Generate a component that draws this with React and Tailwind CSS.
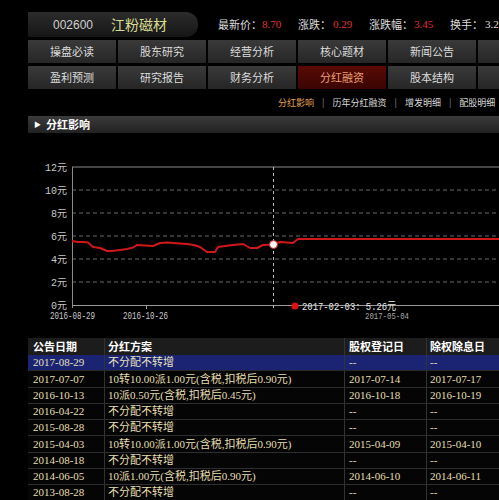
import React from 'react';

const cjk = { fontFamily: '"Noto Sans CJK SC", "Liberation Sans", sans-serif' };
const serif = { fontFamily: '"Liberation Serif", "Noto Sans CJK SC", serif' };

// last column is off screen, only its left edge shows
const navRows = [
  ['操盘必读', '股东研究', '经营分析', '核心题材', '新闻公告', ''],
  ['盈利预测', '研究报告', '财务分析', '分红融资', '股本结构', ''],
];

const rows = [
  ['2017-08-29', '不分配不转增', '--', '--'],
  ['2017-07-07', '10转10.00派1.00元(含税,扣税后0.90元)', '2017-07-14', '2017-07-17'],
  ['2016-10-13', '10派0.50元(含税,扣税后0.45元)', '2016-10-18', '2016-10-19'],
  ['2016-04-22', '不分配不转增', '--', '--'],
  ['2015-08-28', '不分配不转增', '--', '--'],
  ['2015-04-03', '10转10.00派1.00元(含税,扣税后0.90元)', '2015-04-09', '2015-04-10'],
  ['2014-08-18', '不分配不转增', '--', '--'],
  ['2014-06-05', '10派1.00元(含税,扣税后0.90元)', '2014-06-10', '2014-06-11'],
  ['2013-08-28', '不分配不转增', '--', '--'],
];

// price line, svg coords (page y - 158)
const pts = [
  [72, 83], [78, 84], [83, 84], [88, 84.5], [93, 89], [100, 90], [107, 93], [112, 93],
  [120, 92], [127, 91], [133, 89.5], [137, 87], [145, 87.5], [153, 88], [160, 85],
  [167, 84.5], [173, 85], [180, 85.5], [187, 86], [194, 87], [200, 89], [207, 94],
  [215, 94], [218, 89], [225, 88], [233, 87], [243, 86], [250, 90], [257, 90],
  [263, 87], [273, 86.5], [280, 84], [287, 84.5], [293, 85], [298, 81], [499, 81],
];

const gridY = [32, 55, 78, 101, 124];
const yLabels = [['12元', 9], ['10元', 32], ['8元', 55], ['6元', 78], ['4元', 101], ['2元', 124], ['0元', 147]];

const Chart = () => (
  <svg width="499" height="172" viewBox="0 0 499 172" className="block">
    <line x1="72" y1="9" x2="499" y2="9" stroke="#8a8a8a" strokeWidth="1" />
    {gridY.map((y) => (
      <line key={y} x1="72" y1={y} x2="499" y2={y} stroke="#6a6a6a" strokeWidth="1" strokeDasharray="4 3" />
    ))}
    <line x1="72.5" y1="9" x2="72.5" y2="150" stroke="#8a8a8a" strokeWidth="1" />
    <line x1="72" y1="147.5" x2="499" y2="147.5" stroke="#9a9a9a" strokeWidth="1" />
    <line x1="146.5" y1="147" x2="146.5" y2="151" stroke="#9a9a9a" strokeWidth="1" />
    <line x1="273.5" y1="9" x2="273.5" y2="152" stroke="#bdbdbd" strokeWidth="1" strokeDasharray="3 3" />
    {yLabels.map(([t, y]) => (
      <text key={t} x="67" y={y + 3.5} textAnchor="end" fontSize="10" fill="#c8c8c8"
        fontFamily='"Liberation Mono", "Noto Sans CJK SC", monospace'>{t}</text>
    ))}
    <polyline points={pts.map((p) => p.join(',')).join(' ')} fill="none" stroke="#d01818" strokeWidth="2" strokeLinejoin="round" />
    <circle cx="273.5" cy="86.5" r="4" fill="#ffffff" stroke="#d01818" strokeWidth="1" />
    <text x="50" y="161" fontSize="10" fill="#c8c8c8" textLength="45" lengthAdjust="spacingAndGlyphs"
      fontFamily='"Liberation Mono", monospace'>2016-08-29</text>
    <text x="123" y="161" fontSize="10" fill="#c8c8c8" textLength="45" lengthAdjust="spacingAndGlyphs"
      fontFamily='"Liberation Mono", monospace'>2016-10-26</text>
    <text x="365" y="161" fontSize="9.5" fill="#a8a8a8" textLength="44" lengthAdjust="spacingAndGlyphs"
      fontFamily='"Liberation Mono", monospace'>2017-05-04</text>
    <circle cx="295" cy="148" r="3.5" fill="#e01010" />
    <text x="302" y="151.5" fontSize="11" fill="#e8e8e8" textLength="94" lengthAdjust="spacingAndGlyphs"
      fontFamily='"Liberation Mono", "Noto Sans CJK SC", monospace'>2017-02-03: 5.26元</text>
  </svg>
);

const App = () => {
  return (
    <div className="w-[499px] h-[500px] bg-black overflow-hidden" style={cjk}>
      {/* header */}
      <div className="mt-[12px] ml-[28px] h-[25px] flex items-center whitespace-nowrap">
        <div className="w-[170px] shrink-0 h-full flex items-center rounded-r-[12px] bg-gradient-to-b from-[#2c2c2c] to-[#161616]">
          <span className="ml-[25px] text-[12px] text-[#cfcfcf]" style={{ fontFamily: '"Liberation Sans", sans-serif' }}>002600</span>
          <span className="ml-[18px] text-[14px] text-[#d6dc92]">江粉磁材</span>
        </div>
        <div className="ml-[20px] shrink-0 flex items-center text-[11px] text-[#dcdcdc]">
          <div className="w-[80px] flex items-center">最新价：<span className="text-[#e03030]" style={serif}>8.70</span></div>
          <div className="w-[71px] flex items-center">涨跌：<span className="ml-[2px] text-[#e03030]" style={serif}>0.29</span></div>
          <div className="w-[81px] flex items-center">涨跌幅：<span className="ml-[1px] text-[#e03030]" style={serif}>3.45</span></div>
          <div className="flex items-center">换手：<span className="ml-[2px] text-[#dcdcdc]" style={serif}>3.22</span></div>
        </div>
      </div>

      {/* nav */}
      <div className="mt-[3px] ml-[28px] flex flex-col gap-[3px]">
        {navRows.map((r, i) => (
          <div key={i} className="flex gap-[2px]">
            {r.map((t, j) => {
              const active = t === '分红融资';
              return (
                <div
                  key={j}
                  className={
                    active
                      ? 'w-[88px] h-[23px] shrink-0 flex items-center justify-center text-[11px] text-[#e8a070] bg-gradient-to-b from-[#5a0a06] to-[#3a0503]'
                      : 'w-[88px] h-[23px] shrink-0 flex items-center justify-center text-[11px] text-[#dcdcdc] bg-gradient-to-b from-[#3a3a3a] to-[#262626]'
                  }
                >
                  {t}
                </div>
              );
            })}
          </div>
        ))}
      </div>

      {/* sub links */}
      <div className="mt-[7px] h-[14px] ml-[278px] flex items-center text-[9px] whitespace-nowrap">
        <span className="text-[#e0a050]">分红影响</span>
        <span className="mx-[8px] text-[#888]">|</span>
        <span className="text-[#d8d8d8]">历年分红融资</span>
        <span className="mx-[8px] text-[#888]">|</span>
        <span className="text-[#d8d8d8]">增发明细</span>
        <span className="mx-[8px] text-[#888]">|</span>
        <span className="text-[#d8d8d8]">配股明细</span>
      </div>

      {/* section bar */}
      <div className="mt-[6px] ml-[28px] h-[17px] flex items-center bg-gradient-to-b from-[#3a3a3a] to-[#222]">
        <span className="ml-[6px] text-[7px] text-white">▶</span>
        <span className="ml-[5px] text-[11px] font-bold text-white">分红影响</span>
      </div>

      {/* chart */}
      <div className="mt-[25px]">
        <Chart />
      </div>

      {/* table */}
      <div className="mt-[8px] ml-[28px] w-[520px] text-[11px]">
        <div className="flex h-[17px] bg-[#1c1c1c] text-white font-bold">
          <div className="w-[77px] pl-[5px] flex items-center border-r border-[#333]">公告日期</div>
          <div className="w-[240px] pl-[3px] flex items-center border-r border-[#333]">分红方案</div>
          <div className="w-[82px] pl-[4px] flex items-center border-r border-[#333]">股权登记日</div>
          <div className="flex-1 pl-[3px] flex items-center">除权除息日</div>
        </div>
        {rows.map((r, i) => (
          <div
            key={i}
            className={
              i === 0
                ? 'flex h-[16.25px] bg-[#1b2472] text-[#e6e0bc] border-b border-[#2a2a2a]'
                : 'flex h-[16.25px] bg-[#050505] text-[#e6dfae] border-b border-[#2e2e2e]'
            }
            style={serif}
          >
            <div className="w-[77px] pl-[5px] flex items-center border-r border-[#333]">{r[0]}</div>
            <div className="w-[240px] pl-[3px] flex items-center border-r border-[#333] whitespace-nowrap">{r[1]}</div>
            <div className="w-[82px] pl-[4px] flex items-center border-r border-[#333]">{r[2]}</div>
            <div className="flex-1 pl-[3px] flex items-center">{r[3]}</div>
          </div>
        ))}
      </div>
    </div>
  );
};

export default App;
